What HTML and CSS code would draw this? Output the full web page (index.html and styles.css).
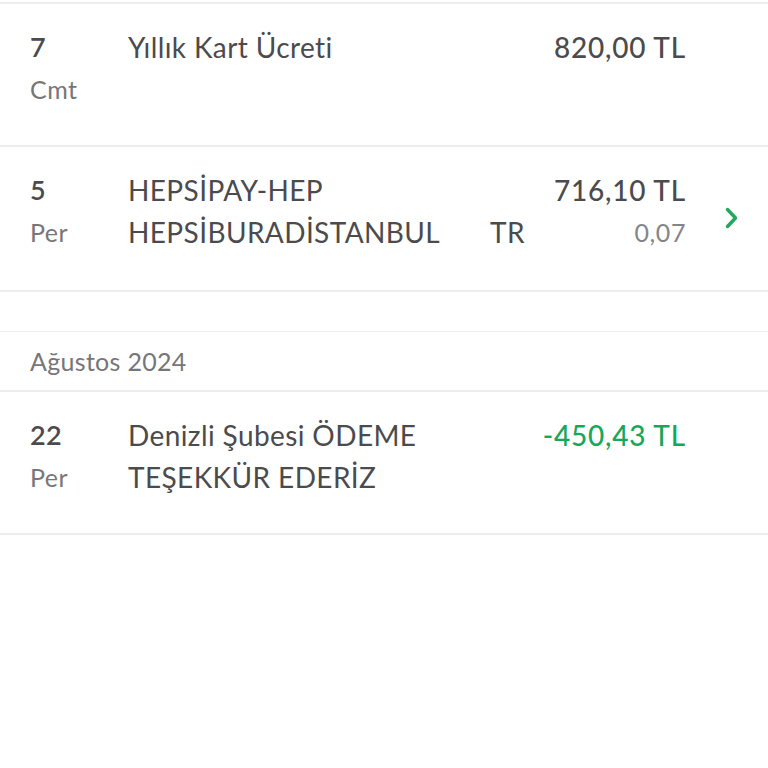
FILE: index.html
```html
<!DOCTYPE html>
<html lang="tr">
<head>
<meta charset="utf-8">
<link rel="stylesheet" href="styles.css">
</head>
<body>
<div class="list">
  <div class="row r1">
    <div class="date"><div class="day">7</div><div class="wd">Cmt</div></div>
    <div class="desc"><div>Yıllık Kart Ücreti</div></div>
    <div class="amt"><div class="val">820,00 TL</div></div>
    <div class="chev"></div>
  </div>
  <div class="row r2">
    <div class="date"><div class="day">5</div><div class="wd">Per</div></div>
    <div class="desc"><div>HEPSİPAY-HEP</div><div>HEPSİBURADİSTANBUL<span class="cc">TR</span></div></div>
    <div class="amt"><div class="val">716,10 TL</div><div class="sub">0,07</div></div>
    <div class="chev">
      <svg width="16" height="24" viewBox="0 0 16 24"><path d="M3.5 3.5 L11.5 12 L3.5 20.5" fill="none" stroke="#22a85b" stroke-width="3.4" stroke-linecap="round" stroke-linejoin="round"/></svg>
    </div>
  </div>
  <div class="spacer"></div>
  <div class="month">Ağustos 2024</div>
  <div class="row r3">
    <div class="date"><div class="day">22</div><div class="wd">Per</div></div>
    <div class="desc"><div>Denizli Şubesi ÖDEME</div><div>TEŞEKKÜR EDERİZ</div></div>
    <div class="amt"><div class="val green">-450,43 TL</div></div>
    <div class="chev"></div>
  </div>
</div>
</body>
</html>
```
FILE: styles.css
```css
* { box-sizing: border-box; }
html, body { margin: 0; padding: 0; background: #fff; }
body {
  font-family: "Lato", "Open Sans", sans-serif;
  color: #4b4b4d;
  width: 768px;
  height: 768px;
  overflow: hidden;
}
.list {
  padding-top: 2px;
}
.row {
  display: flex;
  align-items: flex-start;
  border-top: 2px solid #ececec;
  padding: 22px 0 0 30px;
}
.r1 { height: 143px; }
.r2 { height: 145px; }
.r3 { height: 145px; border-bottom: 2px solid #ececec; }
.date { width: 98px; flex-shrink: 0; }
.day {
  font-size: 27px;
  font-weight: 600;
  line-height: 42px;
  letter-spacing: 0.3px;
  color: #4b4b4d;
}
.wd {
  font-size: 25px;
  line-height: 42px;
  letter-spacing: 0.5px;
  color: #777779;
}
.desc {
  flex: 1;
  min-width: 0;
  font-size: 28px;
  line-height: 42px;
  letter-spacing: 0.4px;
  white-space: nowrap;
  color: #4b4b4d;
}
.cc { margin-left: 50px; }
.amt {
  flex-shrink: 0;
  text-align: right;
  width: 200px;
}
.val {
  font-size: 28px;
  font-weight: 500;
  line-height: 42px;
  letter-spacing: 0.8px;
  color: #4b4b4d;
}
.val.green { color: #16a85a; }
.sub {
  font-size: 25px;
  line-height: 42px;
  letter-spacing: 0.6px;
  color: #858587;
}
.chev {
  width: 82px;
  flex-shrink: 0;
  display: flex;
  justify-content: flex-start;
  padding-top: 37px;
  padding-left: 38px;
}
.spacer {
  height: 41px;
  border-top: 2px solid #ececec;
}
.month {
  border-top: 1px solid #efefef;
  height: 59px;
  padding-left: 30px;
  font-size: 25px;
  line-height: 58px;
  letter-spacing: 0.3px;
  color: #767678;
}
```
